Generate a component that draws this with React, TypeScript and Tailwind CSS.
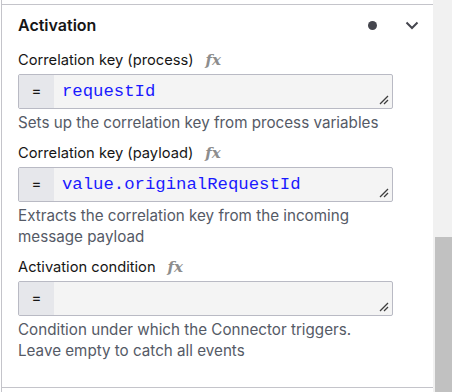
import React from "react";

const sans = { fontFamily: 'Inter, "Noto Sans", sans-serif' };

function Fx() {
  return (
    <span
      className="ml-[12px] text-[15px] font-bold italic text-[#8d8d8d] leading-none"
      style={{ fontFamily: '"DejaVu Serif", serif' }}
    >
      fx
    </span>
  );
}

function Handle() {
  return (
    <svg className="absolute right-[3px] bottom-[3px]" width="10" height="10" viewBox="0 0 10 10">
      <line x1="1" y1="9" x2="9" y2="1" stroke="#3d3d3d" strokeWidth="1.3" />
      <line x1="5" y1="9" x2="9" y2="5" stroke="#3d3d3d" strokeWidth="1.3" />
    </svg>
  );
}

function Field({ label, value, desc }: { label: string; value: string; desc: string[] }) {
  return (
    <div className="flex flex-col">
      <div className="flex items-center h-[20px] text-[14.7px] text-[#161616]">
        <span>{label}</span>
        <Fx />
      </div>
      <div className="relative mt-[4px] flex h-[35px] w-[375px] rounded-[2px] border border-[#b9bac4] bg-[#f4f4f4] overflow-hidden">
        <div className="flex w-[35px] items-center justify-center bg-[#e6e7eb] text-[15px] text-[#161616]">=</div>
        <div
          className="flex items-center pl-[8px] text-[17.3px] text-[#1a1aff]"
          style={{ fontFamily: '"Liberation Mono", monospace' }}
        >
          {value}
        </div>
        <Handle />
      </div>
      <div className="mt-[3px] text-[15.2px] leading-[21px] text-[#555a66]">
        {desc.map((d) => (
          <div key={d}>{d}</div>
        ))}
      </div>
    </div>
  );
}

export default function App() {
  return (
    <div className="flex h-[392px] w-[452px] bg-white" style={sans}>
      <div className="flex w-[433px] flex-col">
        <div className="h-[4px] ml-px border-l border-[#c4c4ca]" />
        <div className="flex flex-1 flex-col ml-px border-l border-t border-[#c4c4ca]">
          <div className="flex h-[40px] items-center pl-[16px] pr-[14px]">
            <span className="text-[16px] font-semibold text-[#161616]">Activation</span>
            <div className="ml-auto h-[9px] w-[9px] rounded-full bg-[#45464e]" />
            <svg className="ml-[28px]" width="14" height="9" viewBox="0 0 14 9">
              <path d="M1.5 1.5 L7 7 L12.5 1.5" fill="none" stroke="#45464e" strokeWidth="2" />
            </svg>
          </div>
          <div className="flex flex-col gap-[10px] pl-[16px] pt-[5px]">
            <Field label="Correlation key (process)" value="requestId" desc={["Sets up the correlation key from process variables"]} />
            <Field
              label="Correlation key (payload)"
              value="value.originalRequestId"
              desc={["Extracts the correlation key from the incoming", "message payload"]}
            />
            <Field
              label="Activation condition"
              value=""
              desc={["Condition under which the Connector triggers.", "Leave empty to catch all events"]}
            />
          </div>
          <div className="flex-1" />
          <div className="h-[5px] border-t border-[#c4c4ca]" />
        </div>
      </div>
      <div className="flex w-[19px] flex-col bg-[#f1f1f1]">
        <div className="h-[237px]" />
        <div className="ml-[2px] flex-1 bg-[#c1c1c1]" />
      </div>
    </div>
  );
}
